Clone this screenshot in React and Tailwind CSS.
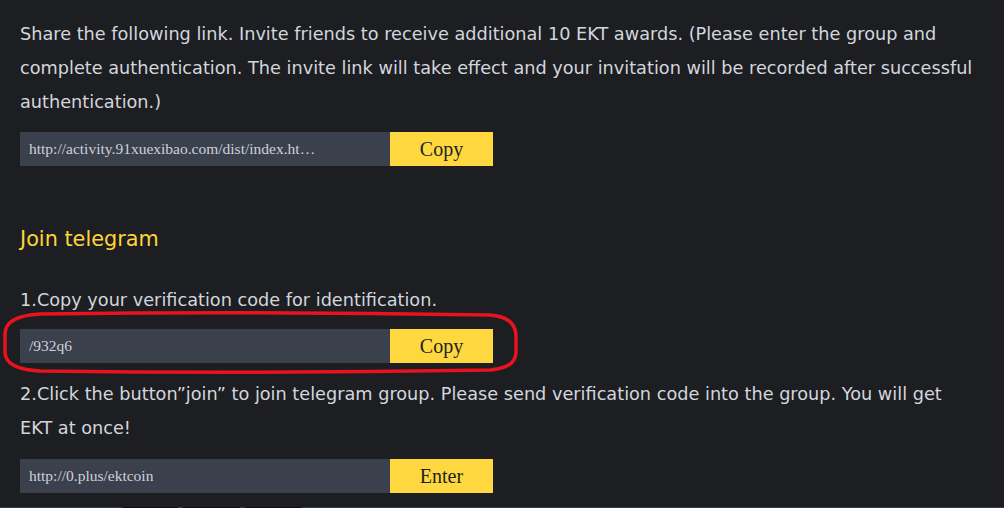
import React from "react";

function Field({ value, label }) {
  return (
    <div className="flex h-[34px] w-[473px]">
      <div className="flex w-[370px] items-center bg-[#3b404d] pl-[9px]">
        <span className="block w-[293px] truncate whitespace-nowrap text-[15.5px] text-[#cdd1d9] [font-family:'Liberation_Serif',serif]">
          {value}
        </span>
      </div>
      <button className="flex w-[103px] items-center justify-center bg-[#ffd83f] text-[20px] text-[#222] [font-family:'Liberation_Serif',serif]">
        {label}
      </button>
    </div>
  );
}

export default function App() {
  return (
    <div className="relative h-[508px] w-[1004px] overflow-hidden bg-[#1d1e22] font-['DejaVu_Sans',Verdana,sans-serif]">
      <div className="flex flex-col pl-[20px] pr-[27px] pt-[17px]">
        <p className="text-[17.7px] leading-[34px] text-[#d3d6dd]">
          Share the following link. Invite friends to receive additional 10 EKT awards. (Please enter the group and
          complete authentication. The invite link will take effect and your invitation will be recorded after successful
          authentication.)
        </p>
        <div className="mt-[13px]">
          <Field value="http://activity.91xuexibao.com/dist/index.html?invite=932q6" label="Copy" />
        </div>

        <h2 className="mt-[56px] text-[20.8px] leading-[34px] text-[#ffd43b]">Join telegram</h2>

        <p className="mt-[27px] text-[17.7px] leading-[34px] text-[#d3d6dd]">
          1.Copy your verification code for identification.
        </p>
        <div className="mt-[12px]">
          <Field value="/932q6" label="Copy" />
        </div>

        <p className="mt-[14px] text-[17.7px] leading-[34px] text-[#d3d6dd]">
          2.Click the button”join” to join telegram group. Please send verification code into the group. You will get
          EKT at once!
        </p>
        <div className="mt-[14px]">
          <Field value="http://0.plus/ektcoin" label="Enter" />
        </div>
      </div>

      {/* annotation ring */}
      <svg className="pointer-events-none absolute left-0 top-[310px]" width="530" height="66" viewBox="0 0 530 66">
        <path
          d="M40 4 Q260 1 490 5 Q516 7 516 26 L516 42 Q516 58 490 60 Q260 64 40 61 Q5 59 5 42 L5 24 Q5 6 40 4 Z"
          fill="none"
          stroke="#e8131f"
          strokeWidth="3.5"
        />
      </svg>

      <div className="absolute bottom-0 left-0 flex h-[1px] w-full bg-[#3a3d44]">
        <div className="ml-[122px] w-[56px] bg-[#0f1012]" />
        <div className="ml-[5px] w-[57px] bg-[#0f1012]" />
        <div className="ml-[5px] w-[57px] bg-[#0f1012]" />
      </div>
    </div>
  );
}
